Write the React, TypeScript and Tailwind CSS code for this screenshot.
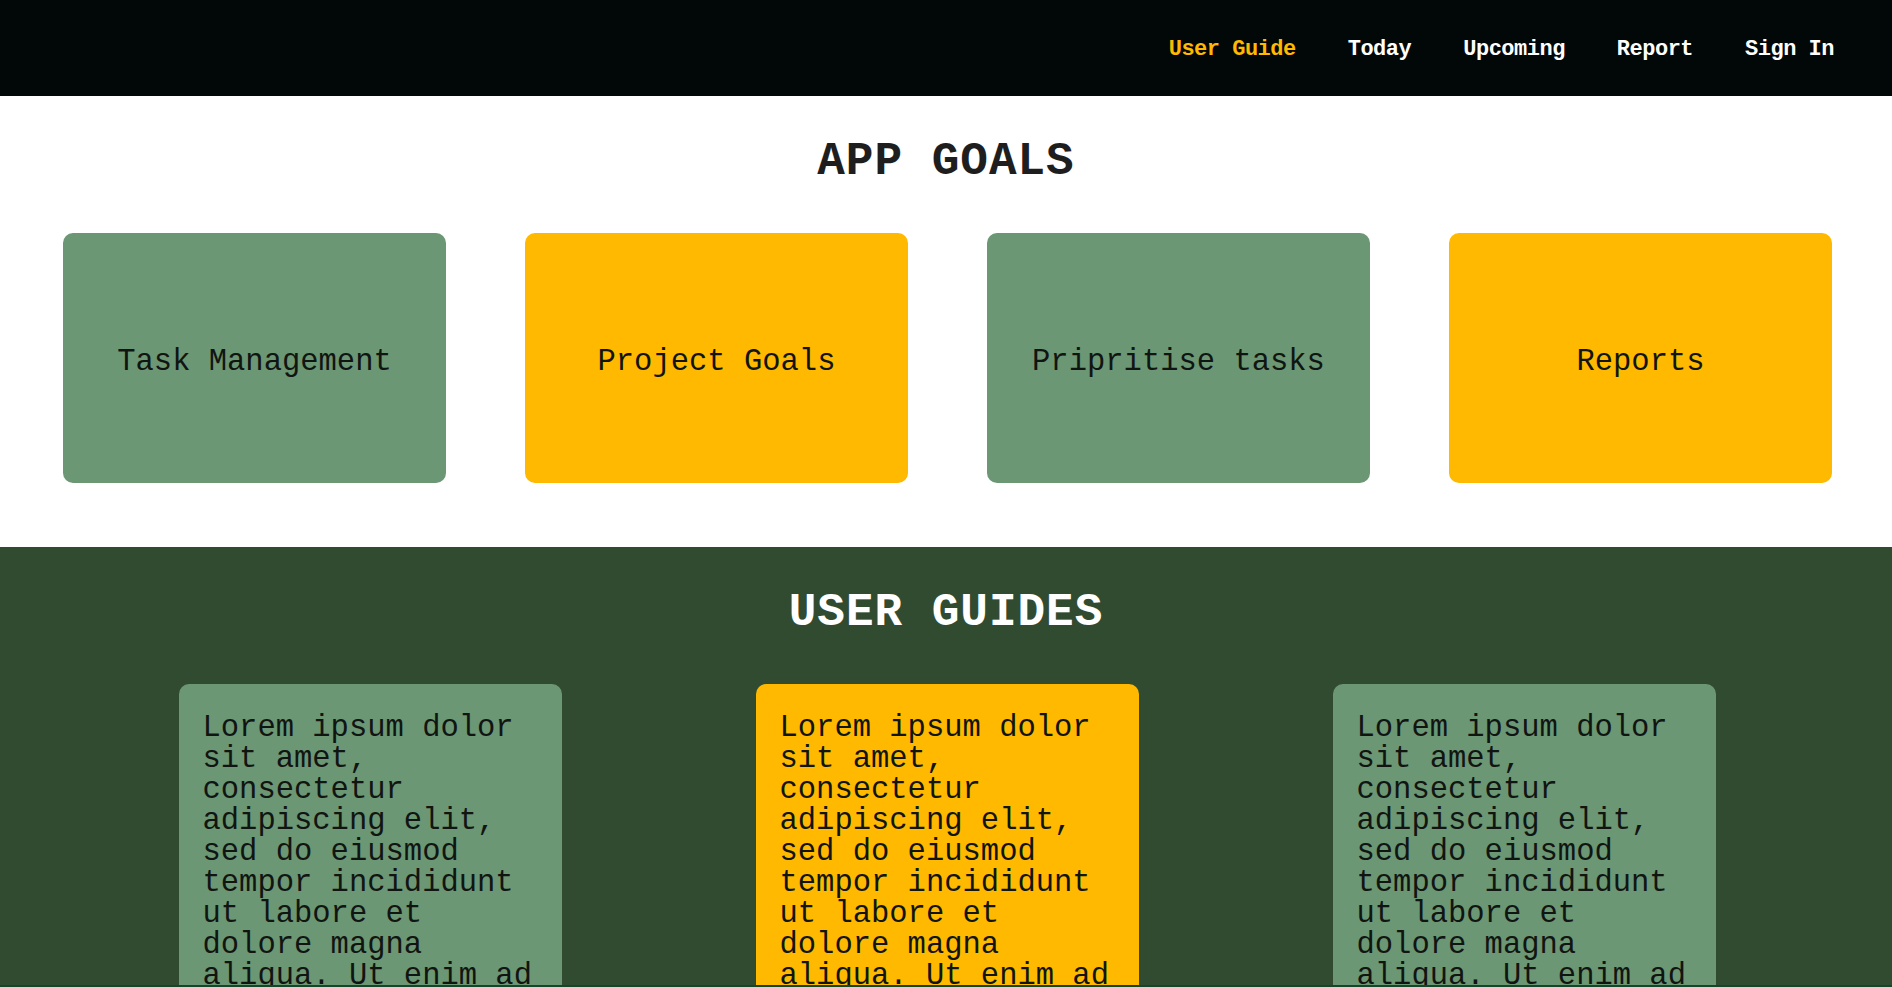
const NAV_LINKS = [
  { label: "User Guide", active: true },
  { label: "Today", active: false },
  { label: "Upcoming", active: false },
  { label: "Report", active: false },
  { label: "Sign In", active: false },
];

const GOALS = [
  { title: "Task Management", color: "bg-[#6c9774]" },
  { title: "Project Goals", color: "bg-[#ffb900]" },
  { title: "Pripritise tasks", color: "bg-[#6c9774]" },
  { title: "Reports", color: "bg-[#ffb900]" },
];

const GUIDE_COLORS = ["bg-[#6c9774]", "bg-[#ffb900]", "bg-[#6c9774]"];

const LOREM =
  "Lorem ipsum dolor sit amet, consectetur adipiscing elit, sed do eiusmod tempor incididunt ut labore et dolore magna aliqua. Ut enim ad minim veniam, quis nostrud exercitation ullamco laboris nisi ut aliquip ex ea commodo consequat.";

function Navbar() {
  return (
    <nav className="flex h-[96px] items-center justify-end gap-[52px] bg-[#020707] pt-[3px] pr-[58px]">
      {NAV_LINKS.map((link) => (
        <a
          key={link.label}
          href="#"
          className={
            link.active
              ? "text-[22px] font-bold tracking-[-0.5px] text-[#ffb900]"
              : "text-[22px] font-bold tracking-[-0.5px] text-white"
          }
        >
          {link.label}
        </a>
      ))}
    </nav>
  );
}

function AppGoals() {
  return (
    <section className="bg-white pt-[38px] pb-[64px]">
      <h2 className="text-center text-[46px] leading-[56px] font-bold tracking-[1px] text-[#1e1e1e]">
        APP GOALS
      </h2>
      <div className="mt-[43px] grid grid-cols-4 gap-[79px] pr-[60px] pl-[63px]">
        {GOALS.map((goal) => (
          <div
            key={goal.title}
            className={`flex h-[250px] items-center justify-center rounded-[10px] pt-[9px] text-[30.5px] text-[#111511] ${goal.color}`}
          >
            {goal.title}
          </div>
        ))}
      </div>
    </section>
  );
}

function UserGuides() {
  return (
    <section className="bg-[#314b31] pt-[38px] pb-16">
      <h2 className="text-center text-[46px] leading-[56px] font-bold tracking-[1px] text-white">
        USER GUIDES
      </h2>
      <div className="mt-[43px] flex justify-center gap-[194px] pl-[2px]">
        {GUIDE_COLORS.map((color, index) => (
          <div
            key={index}
            className={`w-[383px] rounded-[10px] px-6 pt-[29px] pb-6 text-[30.5px] leading-[31px] text-[#111511] ${color}`}
          >
            {LOREM}
          </div>
        ))}
      </div>
    </section>
  );
}

export default function App() {
  return (
    <div className="min-h-screen bg-white font-['Liberation_Mono','DejaVu_Sans_Mono',monospace]">
      <Navbar />
      <AppGoals />
      <UserGuides />
      <div className="fixed inset-x-0 bottom-0 h-[2px] bg-[#11472a]" />
    </div>
  );
}
